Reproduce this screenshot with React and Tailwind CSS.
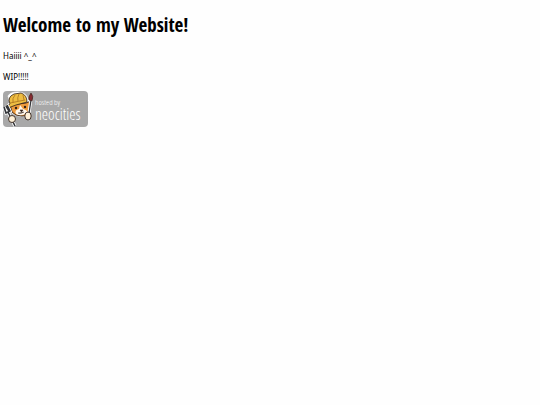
function Mascot() {
  return (
    <svg className="h-9 w-8 shrink-0" viewBox="0 0 32 36" aria-hidden="true">
      <path d="M5 5Q7 1 15 1Q23 1 25 8L28 11L26 15L27 21Q24 26 17 25Q9 25 6 17L3 15L7 11Z" fill="#fff" stroke="#fff" strokeWidth="0.6" strokeLinejoin="round" />
      <path d="M7 14L9 21Q12 25 19 25Q25 25 26 20L28 10L23 12Z" fill="#ef9b3b" stroke="#302018" strokeWidth="0.9" strokeLinejoin="round" />
      <path d="M17 14L16 18Q11 19 13 23Q18 26 24 22Q25 19 20 18Z" fill="#fff8ed" />
      <path d="M7 13Q4 6 11 3L18 2Q24 4 24 11L13 14L5 17L4 15Z" fill="#eebd42" stroke="#302018" strokeWidth="0.8" strokeLinejoin="round" />
      <path d="M12 4Q9 7 10 12M16 3Q14 7 15 10M20 4L21 9M7 12L22 9" fill="none" stroke="#b27c21" strokeWidth="0.9" />
      <circle cx="13" cy="17" r="1.2" fill="#302018" />
      <circle cx="22" cy="16" r="1.2" fill="#302018" />
      <path d="M17 19H20L18.5 21ZM15 22Q18 23 21 21" fill="#302018" stroke="#302018" strokeWidth="0.6" />
      <path d="M1 16L3 22L7 20L4 14M3 15L6 20M5 21L12 35" fill="none" stroke="#fff" strokeWidth="3.2" />
      <path d="M1 16L3 22L7 20L4 14M3 15L6 20M5 21L12 35" fill="none" stroke="#34363a" strokeWidth="1.6" />
      <ellipse cx="9" cy="28" rx="3.5" ry="3.5" fill="#fff1d8" stroke="#302018" strokeWidth="0.9" />
      <path d="M28 8L25 29" stroke="#fff" strokeWidth="3" />
      <path d="M28 9L25 29" stroke="#34363a" strokeWidth="1.3" />
      <path d="M28 2Q31 5 29 10L26 9Q25 6 28 2Z" fill="#872b32" stroke="#302018" strokeWidth="0.6" />
      <ellipse cx="25" cy="25" rx="3.2" ry="4" fill="#fff1d8" stroke="#302018" strokeWidth="0.9" />
    </svg>
  );
}

export default function App() {
  return (
    <main className="min-h-screen bg-[#fefefe] px-[3px] pt-3 font-['Noto_Sans',sans-serif] text-black">
      <h1 className="font-['Open_Sans_Condensed','Noto_Sans',sans-serif] text-[19px] leading-[26px] font-bold">Welcome to my Website!</h1>
      <p className="mt-3 text-[8px] leading-3">Haiiii ^_^</p>
      <p className="mt-[9px] text-[8px] leading-3">WIP!!!!!</p>
      <a href="https://neocities.org" className="mt-2 flex h-9 w-[85px] rounded bg-[#a8a8a8] font-['Open_Sans_Condensed_Light','Open_Sans_Condensed','Liberation_Sans_Narrow',sans-serif] font-light text-white">
        <Mascot />
        <span className="flex flex-col pt-[5px]">
          <span className="text-[8px] leading-[11px]">hosted by</span>
          <span className="text-[16px] leading-[14px]">neocities</span>
        </span>
      </a>
    </main>
  );
}
